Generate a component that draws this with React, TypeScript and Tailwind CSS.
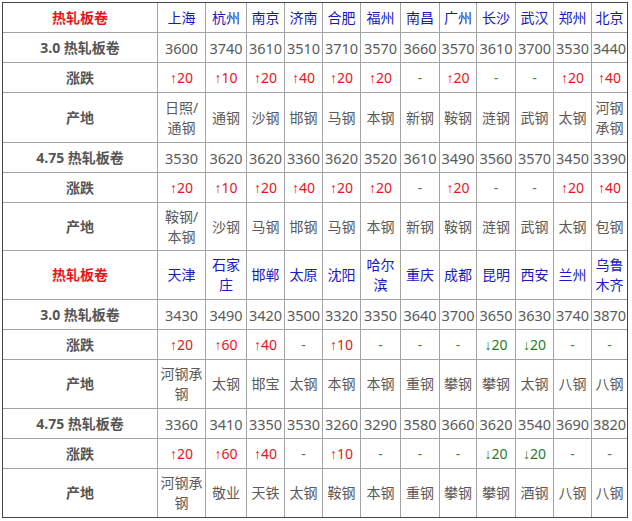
import React from "react";

type Cell = string;

const B1_CITIES = ["上海", "杭州", "南京", "济南", "合肥", "福州", "南昌", "广州", "长沙", "武汉", "郑州", "北京"];
const B1_P30 = ["3600", "3740", "3610", "3510", "3710", "3570", "3660", "3570", "3610", "3700", "3530", "3440"];
const B1_C30 = ["↑20", "↑10", "↑20", "↑40", "↑20", "↑20", "-", "↑20", "-", "-", "↑20", "↑40"];
const B1_O30 = ["日照/|通钢", "通钢", "沙钢", "邯钢", "马钢", "本钢", "新钢", "鞍钢", "涟钢", "武钢", "太钢", "河钢|承钢"];
const B1_P475 = ["3530", "3620", "3620", "3360", "3620", "3520", "3610", "3490", "3560", "3570", "3450", "3390"];
const B1_C475 = ["↑20", "↑10", "↑20", "↑40", "↑20", "↑20", "-", "↑20", "-", "-", "↑20", "↑40"];
const B1_O475 = ["鞍钢/|本钢", "沙钢", "马钢", "邯钢", "马钢", "本钢", "新钢", "鞍钢", "涟钢", "武钢", "太钢", "包钢"];

const B2_CITIES = ["天津", "石家|庄", "邯郸", "太原", "沈阳", "哈尔|滨", "重庆", "成都", "昆明", "西安", "兰州", "乌鲁|木齐"];
const B2_P30 = ["3430", "3490", "3420", "3500", "3320", "3350", "3640", "3700", "3650", "3630", "3740", "3870"];
const B2_C30 = ["↑20", "↑60", "↑40", "-", "↑10", "-", "-", "-", "↓20", "↓20", "-", "-"];
const B2_O30 = ["河钢承|钢", "太钢", "邯宝", "太钢", "本钢", "本钢", "重钢", "攀钢", "攀钢", "太钢", "八钢", "八钢"];
const B2_P475 = ["3360", "3410", "3350", "3530", "3260", "3290", "3580", "3660", "3620", "3540", "3690", "3820"];
const B2_C475 = ["↑20", "↑60", "↑40", "-", "↑10", "-", "-", "-", "↓20", "↓20", "-", "-"];
const B2_O475 = ["河钢承|钢", "敬业", "天铁", "太钢", "鞍钢", "本钢", "重钢", "攀钢", "攀钢", "酒钢", "八钢", "八钢"];

function Lines({ text }: { text: string }) {
  const parts = text.split("|");
  return (
    <div className="flex flex-col items-center leading-[20px]">
      {parts.map((p, i) => (
        <span key={i} className="whitespace-nowrap">
          {p}
        </span>
      ))}
    </div>
  );
}

function CellBox({ children, className = "" }: { children: React.ReactNode; className?: string }) {
  return (
    <div className={"bg-white flex items-center justify-center text-center overflow-visible " + className}>
      {children}
    </div>
  );
}

function Change({ v, dashGray }: { v: Cell; dashGray?: boolean }) {
  if (v === "-") {
    return <span className={dashGray ? "text-[#666]" : "text-[#3c8a3c]"}>-</span>;
  }
  const up = v.startsWith("↑");
  const num = v.slice(1);
  return (
    <span className={"whitespace-nowrap " + (up ? "text-[#e8141c]" : "text-[#2a7a2a]")}>
      <span className="font-['Liberation_Sans',sans-serif]">{up ? "↑" : "↓"}</span>
      {num}
    </span>
  );
}

function Block({
  cities,
  p30,
  c30,
  o30,
  p475,
  c475,
  o475,
  grayDash30,
  grayDash475,
}: {
  cities: string[];
  p30: string[];
  c30: string[];
  o30: string[];
  p475: string[];
  c475: string[];
  o475: string[];
  grayDash30: boolean[];
  grayDash475: boolean[];
}) {
  const label = "font-bold text-[#555]";
  const num = "text-[#5a5a5a] text-[14.5px]";
  return (
    <>
      <CellBox className="text-[#e8141c] font-bold">热轧板卷</CellBox>
      {cities.map((c, i) => (
        <CellBox key={"c" + i} className="text-[#1818c4]">
          <Lines text={c} />
        </CellBox>
      ))}

      <CellBox className={label}>3.0 热轧板卷</CellBox>
      {p30.map((c, i) => (
        <CellBox key={"p" + i} className={num}>
          {c}
        </CellBox>
      ))}

      <CellBox className={label}>涨跌</CellBox>
      {c30.map((c, i) => (
        <CellBox key={"d" + i}>
          <Change v={c} dashGray={grayDash30[i]} />
        </CellBox>
      ))}

      <CellBox className={label}>产地</CellBox>
      {o30.map((c, i) => (
        <CellBox key={"o" + i} className="text-[#5a5a5a]">
          <Lines text={c} />
        </CellBox>
      ))}

      <CellBox className={label}>4.75 热轧板卷</CellBox>
      {p475.map((c, i) => (
        <CellBox key={"q" + i} className={num}>
          {c}
        </CellBox>
      ))}

      <CellBox className={label}>涨跌</CellBox>
      {c475.map((c, i) => (
        <CellBox key={"e" + i}>
          <Change v={c} dashGray={grayDash475[i]} />
        </CellBox>
      ))}

      <CellBox className={label}>产地</CellBox>
      {o475.map((c, i) => (
        <CellBox key={"r" + i} className="text-[#5a5a5a]">
          <Lines text={c} />
        </CellBox>
      ))}
    </>
  );
}

export default function App() {
  const none = new Array(12).fill(false);
  const allGray = new Array(12).fill(true);
  const taiyuan = none.map((_, i) => i === 3);
  return (
    <div className="w-[632px] h-[521px] bg-white pl-[2px] pt-[2px]">
      <div
        className="inline-grid gap-px bg-[#a3a3a3] border border-[#454545] text-[14px] leading-[20px] font-['Noto_Sans','Noto_Sans_CJK_SC',sans-serif]
        grid-cols-[154px_47px_40px_37px_37px_37px_39px_38px_36px_38px_37px_37px_35px]
        grid-rows-[29px_29px_29px_49px_29px_29px_47px_48px_29px_29px_48px_29px_29px_48px]"
      >
        <Block
          cities={B1_CITIES}
          p30={B1_P30}
          c30={B1_C30}
          o30={B1_O30}
          p475={B1_P475}
          c475={B1_C475}
          o475={B1_O475}
          grayDash30={none}
          grayDash475={allGray}
        />
        <Block
          cities={B2_CITIES}
          p30={B2_P30}
          c30={B2_C30}
          o30={B2_O30}
          p475={B2_P475}
          c475={B2_C475}
          o475={B2_O475}
          grayDash30={taiyuan}
          grayDash475={taiyuan}
        />
      </div>
    </div>
  );
}
